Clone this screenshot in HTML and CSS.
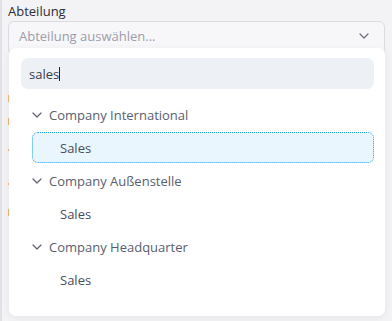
FILE: index.html
```html
<!doctype html>
<html lang="de">
<head>
    <meta charset="UTF-8">
    <title>Abteilung</title>
    <link rel="stylesheet" href="styles.css">
</head>
<body>
<div class="formArea">
    <div class="field">
        <label class="fieldLabel">Abteilung</label>
        <div class="selectBox">
            <span class="placeholder">Abteilung auswählen...</span>
            <svg class="selectArrow" width="10" height="6" viewBox="0 0 10 6"><path d="M1 1l4 4 4-4" fill="none" stroke="#6b6e7c" stroke-width="1.2" stroke-linecap="round" stroke-linejoin="round"/></svg>
        </div>
        <div class="underList">
            <span class="mark tall"></span>
            <span class="mark tall"></span>
            <span class="mark dot"></span>
            <span class="mark dot"></span>
            <span class="mark tall"></span>
        </div>

        <div class="dropdown">
            <div class="searchBox">sales<span class="caret"></span></div>
            <div class="tree">
                <div class="groupRow">
                    <svg class="groupArrow" width="10" height="6" viewBox="0 0 10 6"><path d="M1 1l4 4 4-4" fill="none" stroke="#5e6272" stroke-width="1.2" stroke-linecap="round" stroke-linejoin="round"/></svg>
                    Company International
                </div>
                <div class="itemRow selected">Sales</div>
                <div class="groupRow">
                    <svg class="groupArrow" width="10" height="6" viewBox="0 0 10 6"><path d="M1 1l4 4 4-4" fill="none" stroke="#5e6272" stroke-width="1.2" stroke-linecap="round" stroke-linejoin="round"/></svg>
                    Company Außenstelle
                </div>
                <div class="itemRow">Sales</div>
                <div class="groupRow">
                    <svg class="groupArrow" width="10" height="6" viewBox="0 0 10 6"><path d="M1 1l4 4 4-4" fill="none" stroke="#5e6272" stroke-width="1.2" stroke-linecap="round" stroke-linejoin="round"/></svg>
                    Company Headquarter
                </div>
                <div class="itemRow">Sales</div>
            </div>
        </div>
    </div>
</div>
</body>
</html>
```
FILE: styles.css
```css
body {
    margin: 0;
    height: 321px;
    background: #f3f2f5;
    font-family: "Open Sans", "Noto Sans", sans-serif;
    overflow: hidden;
}

.formArea {
    height: 100%;
    border-left: 2px solid #e2e1e6;
    padding: 3px 7px 0 6px;
    box-sizing: border-box;
}

.field {
    position: relative;
}

.fieldLabel {
    display: block;
    font-size: 13px;
    line-height: 16px;
    color: #2e2e3a;
    margin-bottom: 2px;
}

.selectBox {
    display: flex;
    align-items: center;
    justify-content: space-between;
    height: 34px;
    padding: 0 15px 0 10px;
    border: 1px solid #dcdbe2;
    border-radius: 6px;
    background: #f7f7f9;
    box-sizing: border-box;
}

.selectBox .placeholder {
    font-size: 13px;
    color: #9d9ca9;
    margin-top: -4px;
}

.selectArrow {
    margin-top: -4px;
}

.underList {
    display: flex;
    flex-direction: column;
    gap: 16px;
    padding-top: 40px;
}

.mark {
    display: block;
    width: 1px;
    background: #f2b37a;
}

.mark.tall {
    height: 7px;
}

.mark.dot {
    height: 2px;
    margin: 8px 0;
}

.dropdown {
    position: absolute;
    top: 45px;
    left: 1px;
    right: 0;
    height: 268px;
    background: #fff;
    border-radius: 7px;
    box-shadow: 0 2px 8px #0000000f;
    padding: 10px 11px 0 12px;
    box-sizing: border-box;
}

.searchBox {
    height: 31px;
    background: #edf1f5;
    border-radius: 7px;
    padding: 0 8px;
    display: flex;
    align-items: center;
    font-size: 13px;
    color: #3a3b48;
}

.caret {
    display: inline-block;
    width: 1px;
    height: 14px;
    background: #1f2030;
}

.tree {
    padding: 8px 0 0 11px;
}

.groupRow {
    display: flex;
    align-items: center;
    gap: 6px;
    height: 31px;
    margin: 2px 0;
    font-size: 13px;
    color: #595e6f;
}

.groupArrow {
    margin-right: 1px;
}

.itemRow {
    height: 31px;
    margin: 2px 0;
    padding-left: 27px;
    display: flex;
    align-items: center;
    font-size: 13px;
    color: #4a4c5b;
    border: 1px solid transparent;
    border-radius: 6px;
    box-sizing: border-box;
}

.itemRow.selected {
    background: #e9f6fe;
    border: 1px dotted #1fa0ef;
}
```
